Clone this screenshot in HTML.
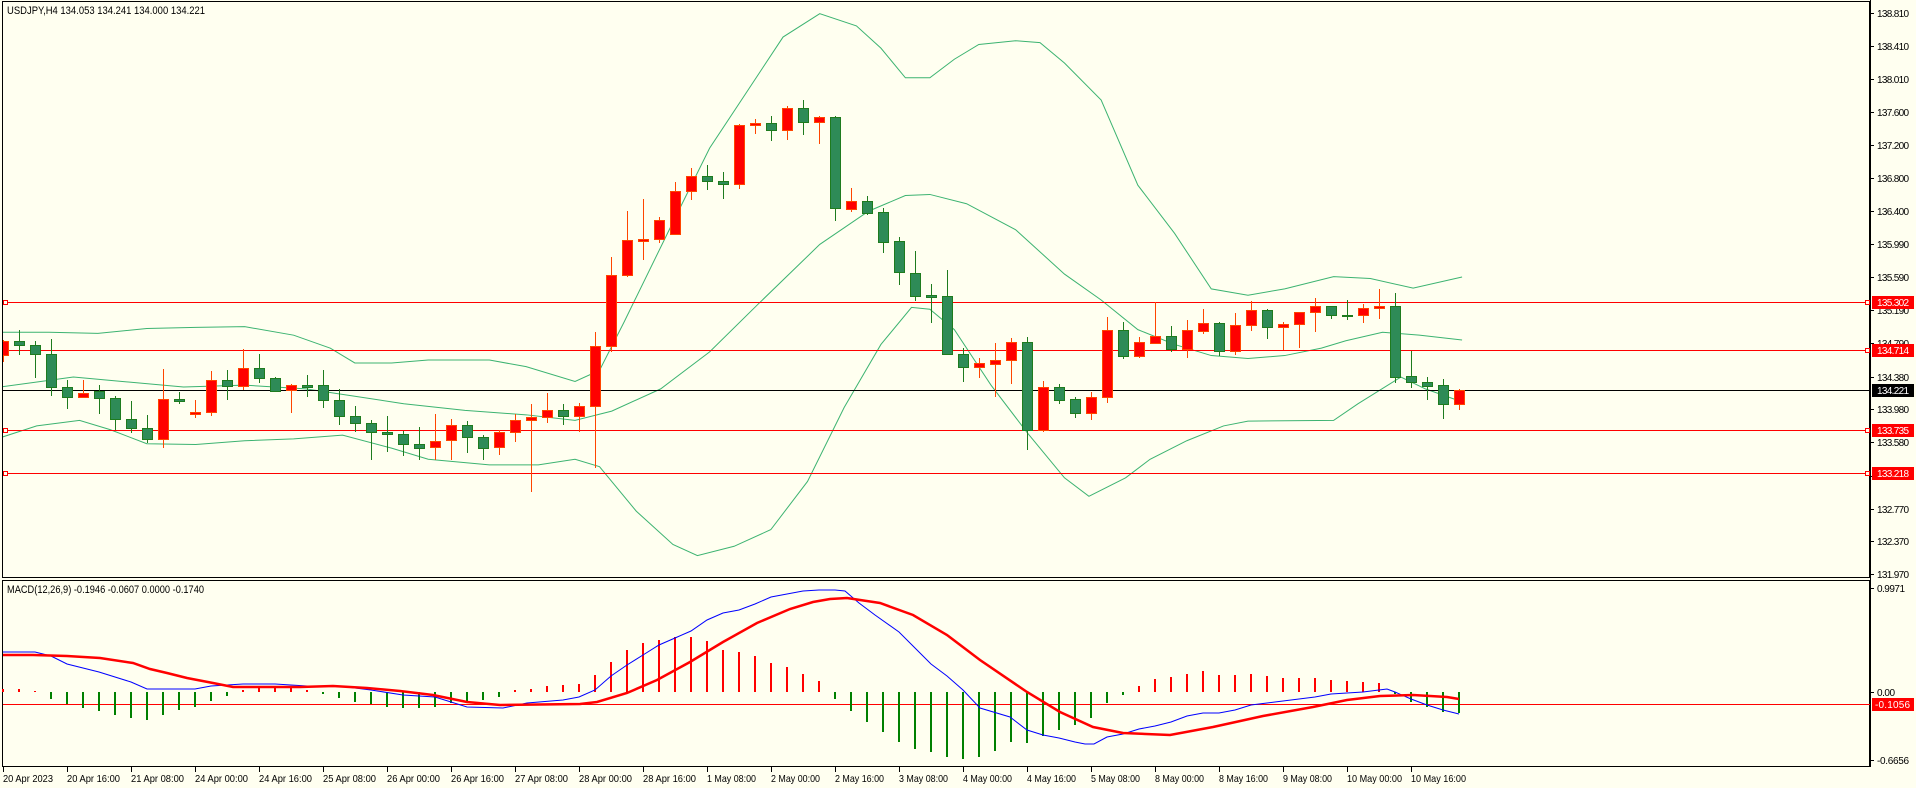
<!DOCTYPE html>
<html><head><meta charset="utf-8"><style>
html,body{margin:0;padding:0;background:#fffff0;}
body{width:1916px;height:788px;overflow:hidden;}
svg{display:block;font-family:"Liberation Sans","DejaVu Sans",sans-serif;}
.g{stroke:#1e7b1e;fill:#2e8b57;stroke-width:1}
.r{stroke:#ff4500;fill:#ff0000;stroke-width:1}
.pl{font-size:10px;fill:#000}
.dl{font-size:10.5px;fill:#000}
</style></head><body>
<svg width="1916" height="788" viewBox="0 0 1916 788" xmlns="http://www.w3.org/2000/svg" shape-rendering="crispEdges">
<rect x="0" y="0" width="1916" height="788" fill="#fffff0"/>
<rect x="2.5" y="1.5" width="1867" height="576" fill="none" stroke="#000"/>
<rect x="2.5" y="580.5" width="1867" height="186" fill="none" stroke="#000"/>
<line x1="1870.5" y1="0" x2="1870.5" y2="767" stroke="#000"/>

<clipPath id="cp"><rect x="3" y="2" width="1867" height="575"/></clipPath>
<g clip-path="url(#cp)" fill="none" stroke="#3cb371" stroke-width="1" shape-rendering="auto">
<g transform="scale(1.2235,0.37037)">
<polyline vector-effect="non-scaling-stroke" points="0,897 40,897 80,900 120,887 160,884 200,882 240,905 270,940 290,980 320,980 350,972 400,972 430,990 470,1030 490,1000 510,870 550,600 580,400 610,250 640,100 670,37 700,70 720,130 740,210 760,210 780,160 800,120 830,110 850,115 870,170 900,270 930,500 960,630 990,780 1020,797 1050,780 1090,747 1120,752 1155,778 1195,748"/>
<polyline vector-effect="non-scaling-stroke" points="0,1045 60,1018 100,1030 150,1045 200,1040 250,1050 290,1070 330,1090 380,1108 430,1120 470,1135 500,1110 540,1050 580,950 620,820 670,660 710,570 740,528 760,525 790,550 830,620 870,740 900,810 930,890 960,930 990,960 1020,968 1050,960 1080,940 1100,920 1130,897 1160,905 1195,918"/>
<polyline vector-effect="non-scaling-stroke" points="0,1182 30,1150 65,1135 90,1160 120,1198 160,1200 200,1190 240,1185 280,1175 320,1210 350,1240 400,1255 440,1255 470,1240 490,1260 520,1380 550,1470 570,1500 600,1475 630,1430 660,1300 690,1100 720,930 745,830 760,835 780,890 810,1040 840,1170 870,1290 890,1340 920,1290 940,1240 970,1190 1000,1150 1020,1137 1090,1135 1110,1090 1145,1018 1165,1050 1195,1085"/>
</g></g>

<g stroke-width="1">
<line x1="3" y1="302.5" x2="1870" y2="302.5" stroke="#ff0000"/>
<line x1="3" y1="350.5" x2="1870" y2="350.5" stroke="#ff0000"/>
<line x1="3" y1="430.5" x2="1870" y2="430.5" stroke="#ff0000"/>
<line x1="3" y1="473.5" x2="1870" y2="473.5" stroke="#ff0000"/>
<line x1="3" y1="390.5" x2="1870" y2="390.5" stroke="#000"/>
<g fill="#fffff0" stroke="#ff0000">
<rect x="3.5" y="300.5" width="4" height="4"/><rect x="1865.5" y="300.5" width="4" height="4"/>
<rect x="3.5" y="348.5" width="4" height="4"/><rect x="1865.5" y="348.5" width="4" height="4"/>
<rect x="3.5" y="428.5" width="4" height="4"/><rect x="1865.5" y="428.5" width="4" height="4"/>
<rect x="3.5" y="471.5" width="4" height="4"/><rect x="1865.5" y="471.5" width="4" height="4"/>
</g></g>

<g class="g" clip-path="url(#cp)">
<line x1="19.5" y1="330" x2="19.5" y2="355"/><rect x="14.5" y="341.5" width="10" height="4"/>
<line x1="35.5" y1="341" x2="35.5" y2="378"/><rect x="30.5" y="345.5" width="10" height="9"/>
<line x1="51.5" y1="339" x2="51.5" y2="396"/><rect x="46.5" y="354.5" width="10" height="33"/>
<line x1="67.5" y1="380" x2="67.5" y2="409"/><rect x="62.5" y="387.5" width="10" height="10"/>
<line x1="99.5" y1="385" x2="99.5" y2="414"/><rect x="94.5" y="391.5" width="10" height="7"/>
<line x1="115.5" y1="396" x2="115.5" y2="430"/><rect x="110.5" y="398.5" width="10" height="21"/>
<line x1="131.5" y1="401" x2="131.5" y2="433"/><rect x="126.5" y="419.5" width="10" height="9"/>
<line x1="147.5" y1="415" x2="147.5" y2="443"/><rect x="142.5" y="428.5" width="10" height="11"/>
<line x1="179.5" y1="392" x2="179.5" y2="404"/><rect x="174.5" y="399.5" width="10" height="2"/>
<line x1="227.5" y1="370" x2="227.5" y2="400"/><rect x="222.5" y="380.5" width="10" height="6"/>
<line x1="259.5" y1="354" x2="259.5" y2="383"/><rect x="254.5" y="368.5" width="10" height="10"/>
<line x1="275.5" y1="377" x2="275.5" y2="391"/><rect x="270.5" y="378.5" width="10" height="13"/>
<line x1="307.5" y1="375" x2="307.5" y2="397"/><rect x="302.5" y="385.5" width="10" height="2"/>
<line x1="323.5" y1="370" x2="323.5" y2="408"/><rect x="318.5" y="385.5" width="10" height="15"/>
<line x1="339.5" y1="389" x2="339.5" y2="425"/><rect x="334.5" y="400.5" width="10" height="16"/>
<line x1="355.5" y1="406" x2="355.5" y2="432"/><rect x="350.5" y="416.5" width="10" height="7"/>
<line x1="371.5" y1="420" x2="371.5" y2="460"/><rect x="366.5" y="423.5" width="10" height="9"/>
<line x1="387.5" y1="416" x2="387.5" y2="452"/><rect x="382.5" y="432.5" width="10" height="2"/>
<line x1="403.5" y1="431" x2="403.5" y2="456"/><rect x="398.5" y="434.5" width="10" height="10"/>
<line x1="419.5" y1="427" x2="419.5" y2="460"/><rect x="414.5" y="444.5" width="10" height="4"/>
<line x1="467.5" y1="421" x2="467.5" y2="453"/><rect x="462.5" y="425.5" width="10" height="12"/>
<line x1="483.5" y1="435" x2="483.5" y2="460"/><rect x="478.5" y="437.5" width="10" height="11"/>
<line x1="563.5" y1="404" x2="563.5" y2="425"/><rect x="558.5" y="410.5" width="10" height="6"/>
<line x1="707.5" y1="165" x2="707.5" y2="190"/><rect x="702.5" y="176.5" width="10" height="5"/>
<line x1="723.5" y1="172" x2="723.5" y2="199"/><rect x="718.5" y="181.5" width="10" height="3"/>
<line x1="771.5" y1="116" x2="771.5" y2="141"/><rect x="766.5" y="123.5" width="10" height="7"/>
<line x1="803.5" y1="100" x2="803.5" y2="135"/><rect x="798.5" y="108.5" width="10" height="14"/>
<line x1="835.5" y1="116" x2="835.5" y2="221"/><rect x="830.5" y="117.5" width="10" height="91"/>
<line x1="867.5" y1="196" x2="867.5" y2="215"/><rect x="862.5" y="201.5" width="10" height="12"/>
<line x1="883.5" y1="208" x2="883.5" y2="253"/><rect x="878.5" y="212.5" width="10" height="30"/>
<line x1="899.5" y1="237" x2="899.5" y2="285"/><rect x="894.5" y="241.5" width="10" height="31"/>
<line x1="915.5" y1="251" x2="915.5" y2="301"/><rect x="910.5" y="273.5" width="10" height="23"/>
<line x1="931.5" y1="284" x2="931.5" y2="323"/><rect x="926.5" y="295.5" width="10" height="2"/>
<line x1="947.5" y1="270" x2="947.5" y2="354"/><rect x="942.5" y="296.5" width="10" height="58"/>
<line x1="963.5" y1="348" x2="963.5" y2="382"/><rect x="958.5" y="354.5" width="10" height="13"/>
<line x1="1027.5" y1="337" x2="1027.5" y2="450"/><rect x="1022.5" y="342.5" width="10" height="88"/>
<line x1="1059.5" y1="384" x2="1059.5" y2="404"/><rect x="1054.5" y="387.5" width="10" height="13"/>
<line x1="1075.5" y1="397" x2="1075.5" y2="418"/><rect x="1070.5" y="399.5" width="10" height="14"/>
<line x1="1123.5" y1="322" x2="1123.5" y2="359"/><rect x="1118.5" y="330.5" width="10" height="26"/>
<line x1="1171.5" y1="326" x2="1171.5" y2="352"/><rect x="1166.5" y="336.5" width="10" height="13"/>
<line x1="1219.5" y1="322" x2="1219.5" y2="356"/><rect x="1214.5" y="323.5" width="10" height="28"/>
<line x1="1267.5" y1="309" x2="1267.5" y2="339"/><rect x="1262.5" y="310.5" width="10" height="17"/>
<line x1="1331.5" y1="306" x2="1331.5" y2="319"/><rect x="1326.5" y="306.5" width="10" height="9"/>
<line x1="1347.5" y1="300" x2="1347.5" y2="320"/><rect x="1342.5" y="315.5" width="10" height="1"/>
<line x1="1395.5" y1="293" x2="1395.5" y2="383"/><rect x="1390.5" y="306.5" width="10" height="71"/>
<line x1="1411.5" y1="351" x2="1411.5" y2="388"/><rect x="1406.5" y="376.5" width="10" height="6"/>
<line x1="1427.5" y1="377" x2="1427.5" y2="400"/><rect x="1422.5" y="382.5" width="10" height="4"/>
<line x1="1443.5" y1="379" x2="1443.5" y2="419"/><rect x="1438.5" y="385.5" width="10" height="19"/>
</g>
<g class="r" clip-path="url(#cp)">
<line x1="3.5" y1="340" x2="3.5" y2="362"/><rect x="-1.5" y="341.5" width="10" height="14"/>
<line x1="83.5" y1="380" x2="83.5" y2="397"/><rect x="78.5" y="393.5" width="10" height="4"/>
<line x1="163.5" y1="369" x2="163.5" y2="448"/><rect x="158.5" y="399.5" width="10" height="40"/>
<line x1="195.5" y1="400" x2="195.5" y2="418"/><rect x="190.5" y="412.5" width="10" height="2"/>
<line x1="211.5" y1="371" x2="211.5" y2="416"/><rect x="206.5" y="380.5" width="10" height="32"/>
<line x1="243.5" y1="349" x2="243.5" y2="390"/><rect x="238.5" y="368.5" width="10" height="18"/>
<line x1="291.5" y1="384" x2="291.5" y2="413"/><rect x="286.5" y="385.5" width="10" height="5"/>
<line x1="435.5" y1="414" x2="435.5" y2="460"/><rect x="430.5" y="441.5" width="10" height="6"/>
<line x1="451.5" y1="419" x2="451.5" y2="460"/><rect x="446.5" y="425.5" width="10" height="15"/>
<line x1="499.5" y1="430" x2="499.5" y2="455"/><rect x="494.5" y="432.5" width="10" height="15"/>
<line x1="515.5" y1="414" x2="515.5" y2="442"/><rect x="510.5" y="420.5" width="10" height="12"/>
<line x1="531.5" y1="404" x2="531.5" y2="492"/><rect x="526.5" y="417.5" width="10" height="3"/>
<line x1="547.5" y1="393" x2="547.5" y2="423"/><rect x="542.5" y="410.5" width="10" height="7"/>
<line x1="579.5" y1="403" x2="579.5" y2="432"/><rect x="574.5" y="406.5" width="10" height="10"/>
<line x1="595.5" y1="332" x2="595.5" y2="468"/><rect x="590.5" y="346.5" width="10" height="60"/>
<line x1="611.5" y1="257" x2="611.5" y2="352"/><rect x="606.5" y="275.5" width="10" height="71"/>
<line x1="627.5" y1="211" x2="627.5" y2="277"/><rect x="622.5" y="240.5" width="10" height="35"/>
<line x1="643.5" y1="199" x2="643.5" y2="260"/><rect x="638.5" y="239.5" width="10" height="2"/>
<line x1="659.5" y1="217" x2="659.5" y2="243"/><rect x="654.5" y="220.5" width="10" height="19"/>
<line x1="675.5" y1="182" x2="675.5" y2="234"/><rect x="670.5" y="191.5" width="10" height="43"/>
<line x1="691.5" y1="168" x2="691.5" y2="200"/><rect x="686.5" y="176.5" width="10" height="15"/>
<line x1="739.5" y1="124" x2="739.5" y2="189"/><rect x="734.5" y="125.5" width="10" height="59"/>
<line x1="755.5" y1="119" x2="755.5" y2="134"/><rect x="750.5" y="123.5" width="10" height="2"/>
<line x1="787.5" y1="106" x2="787.5" y2="140"/><rect x="782.5" y="108.5" width="10" height="22"/>
<line x1="819.5" y1="116" x2="819.5" y2="144"/><rect x="814.5" y="117.5" width="10" height="5"/>
<line x1="851.5" y1="188" x2="851.5" y2="212"/><rect x="846.5" y="201.5" width="10" height="8"/>
<line x1="979.5" y1="358" x2="979.5" y2="378"/><rect x="974.5" y="363.5" width="10" height="4"/>
<line x1="995.5" y1="343" x2="995.5" y2="397"/><rect x="990.5" y="360.5" width="10" height="4"/>
<line x1="1011.5" y1="338" x2="1011.5" y2="384"/><rect x="1006.5" y="342.5" width="10" height="18"/>
<line x1="1043.5" y1="381" x2="1043.5" y2="432"/><rect x="1038.5" y="387.5" width="10" height="43"/>
<line x1="1091.5" y1="392" x2="1091.5" y2="420"/><rect x="1086.5" y="397.5" width="10" height="16"/>
<line x1="1107.5" y1="317" x2="1107.5" y2="403"/><rect x="1102.5" y="330.5" width="10" height="67"/>
<line x1="1139.5" y1="337" x2="1139.5" y2="358"/><rect x="1134.5" y="342.5" width="10" height="14"/>
<line x1="1155.5" y1="302" x2="1155.5" y2="343"/><rect x="1150.5" y="336.5" width="10" height="7"/>
<line x1="1187.5" y1="320" x2="1187.5" y2="358"/><rect x="1182.5" y="330.5" width="10" height="19"/>
<line x1="1203.5" y1="309" x2="1203.5" y2="334"/><rect x="1198.5" y="323.5" width="10" height="8"/>
<line x1="1235.5" y1="313" x2="1235.5" y2="355"/><rect x="1230.5" y="325.5" width="10" height="26"/>
<line x1="1251.5" y1="301" x2="1251.5" y2="331"/><rect x="1246.5" y="310.5" width="10" height="15"/>
<line x1="1283.5" y1="322" x2="1283.5" y2="350"/><rect x="1278.5" y="324.5" width="10" height="3"/>
<line x1="1299.5" y1="312" x2="1299.5" y2="348"/><rect x="1294.5" y="312.5" width="10" height="12"/>
<line x1="1315.5" y1="298" x2="1315.5" y2="332"/><rect x="1310.5" y="306.5" width="10" height="6"/>
<line x1="1363.5" y1="304" x2="1363.5" y2="323"/><rect x="1358.5" y="308.5" width="10" height="7"/>
<line x1="1379.5" y1="289" x2="1379.5" y2="319"/><rect x="1374.5" y="306.5" width="10" height="2"/>
<line x1="1459.5" y1="389" x2="1459.5" y2="410"/><rect x="1454.5" y="390.5" width="10" height="14"/>
</g>

<text x="7" y="14" font-size="11" fill="#000" textLength="198" lengthAdjust="spacingAndGlyphs">USDJPY,H4  134.053 134.241 134.000 134.221</text>

<g stroke="#000">
<line x1="1870" y1="13.5" x2="1874" y2="13.5"/><line x1="1870" y1="46.5" x2="1874" y2="46.5"/><line x1="1870" y1="79.5" x2="1874" y2="79.5"/><line x1="1870" y1="112.5" x2="1874" y2="112.5"/><line x1="1870" y1="145.5" x2="1874" y2="145.5"/><line x1="1870" y1="178.5" x2="1874" y2="178.5"/><line x1="1870" y1="211.5" x2="1874" y2="211.5"/><line x1="1870" y1="244.5" x2="1874" y2="244.5"/><line x1="1870" y1="277.5" x2="1874" y2="277.5"/><line x1="1870" y1="310.5" x2="1874" y2="310.5"/><line x1="1870" y1="343.5" x2="1874" y2="343.5"/><line x1="1870" y1="377.5" x2="1874" y2="377.5"/><line x1="1870" y1="409.5" x2="1874" y2="409.5"/><line x1="1870" y1="442.5" x2="1874" y2="442.5"/><line x1="1870" y1="476.5" x2="1874" y2="476.5"/><line x1="1870" y1="509.5" x2="1874" y2="509.5"/><line x1="1870" y1="541.5" x2="1874" y2="541.5"/><line x1="1870" y1="574.5" x2="1874" y2="574.5"/>
<line x1="1870" y1="588.5" x2="1874" y2="588.5"/><line x1="1870" y1="692.5" x2="1874" y2="692.5"/><line x1="1870" y1="760.5" x2="1874" y2="760.5"/>
</g>
<g class="pl">
<text x="1877" y="17" textLength="32">138.810</text>
<text x="1877" y="50" textLength="32">138.410</text>
<text x="1877" y="83" textLength="32">138.010</text>
<text x="1877" y="116" textLength="32">137.600</text>
<text x="1877" y="149" textLength="32">137.200</text>
<text x="1877" y="182" textLength="32">136.800</text>
<text x="1877" y="215" textLength="32">136.400</text>
<text x="1877" y="248" textLength="32">135.990</text>
<text x="1877" y="281" textLength="32">135.590</text>
<text x="1877" y="314" textLength="32">135.190</text>
<text x="1877" y="347" textLength="32">134.790</text>
<text x="1877" y="381" textLength="32">134.380</text>
<text x="1877" y="413" textLength="32">133.980</text>
<text x="1877" y="446" textLength="32">133.580</text>
<text x="1877" y="480" textLength="32">133.170</text>
<text x="1877" y="513" textLength="32">132.770</text>
<text x="1877" y="545" textLength="32">132.370</text>
<text x="1877" y="578" textLength="32">131.970</text>
<text x="1877" y="592" textLength="28">0.9971</text>
<text x="1877" y="696" textLength="18">0.00</text>
<text x="1877" y="764" textLength="32">-0.6656</text>
</g>
<g>
<rect x="1872" y="296" width="42" height="13" fill="#ff0000"/>
<rect x="1872" y="344" width="42" height="13" fill="#ff0000"/>
<rect x="1872" y="424" width="42" height="13" fill="#ff0000"/>
<rect x="1872" y="467" width="42" height="13" fill="#ff0000"/>
<rect x="1872" y="384" width="42" height="13" fill="#000"/>
<rect x="1872" y="698" width="42" height="13" fill="#ff0000"/>
</g>
<g class="pl" style="fill:#fff">
<text x="1877" y="306" textLength="32">135.302</text>
<text x="1877" y="354" textLength="32">134.714</text>
<text x="1877" y="434" textLength="32">133.735</text>
<text x="1877" y="477" textLength="32">133.218</text>
<text x="1877" y="394" textLength="32">134.221</text>
<text x="1875" y="708" textLength="35">-0.1056</text>
</g>

<text x="7" y="593" font-size="11" fill="#000" textLength="197" lengthAdjust="spacingAndGlyphs">MACD(12,26,9) -0.1946 -0.0607 0.0000 -0.1740</text>
<line x1="3" y1="704.5" x2="1870" y2="704.5" stroke="#ff0000"/>
<path stroke="#ff0000" stroke-width="2" fill="none" d="M3 692V689M19 692V689M35 692V691M243 692V690M259 692V687M275 692V687M291 692V687M307 692V690M515 692V690M531 692V689M547 692V686M563 692V685M579 692V684M595 692V675M611 692V662M627 692V650M643 692V643M659 692V640M675 692V637M691 692V637M707 692V641M723 692V650M739 692V652M755 692V656M771 692V663M787 692V667M803 692V674M819 692V681M1139 692V686M1155 692V679M1171 692V677M1187 692V674M1203 692V671M1219 692V675M1235 692V675M1251 692V674M1267 692V676M1283 692V678M1299 692V678M1315 692V678M1331 692V680M1347 692V681M1363 692V682M1379 692V683"/>
<path stroke="#008000" stroke-width="2" fill="none" d="M51 692V699M67 692V704M83 692V708M99 692V711M115 692V715M131 692V718M147 692V720M163 692V715M179 692V710M195 692V707M211 692V701M227 692V696M323 692V694M339 692V698M355 692V702M371 692V704M387 692V707M403 692V708M419 692V708M435 692V707M451 692V703M467 692V701M483 692V700M499 692V697M835 692V699M851 692V711M867 692V722M883 692V732M899 692V742M915 692V749M931 692V752M947 692V757M963 692V759M979 692V757M995 692V751M1011 692V742M1027 692V743M1043 692V736M1059 692V730M1075 692V725M1091 692V718M1107 692V703M1123 692V695M1395 692V694M1411 692V702M1427 692V707M1443 692V712M1459 692V713"/>
<polyline shape-rendering="auto" fill="none" stroke="#0000ff" stroke-width="1" points="3,652 35,652 51,656 67,664 99,672 131,682 147,689 195,689 211,686 243,684 275,684 307,686 339,686 371,690 403,695 435,697 467,707 503,708 527,703 563,700 579,697 595,690 611,676 627,665 643,655 659,645 675,638 691,631 707,620 723,613 739,610 755,604 771,597 787,594 803,591 819,590 835,590 845,591 859,603 875,615 899,632 915,648 931,664 947,676 963,690 980,708 1010,717 1027,730 1043,735 1059,738 1075,742 1085,744 1094,744 1107,737 1123,734 1139,729 1155,726 1171,722 1187,716 1203,713 1219,713 1235,710 1251,705 1267,703 1283,701 1299,699 1315,697 1331,694 1347,693 1363,692 1379,690 1387,689 1395,692 1411,699 1427,705 1443,710 1459,714"/>
<polyline shape-rendering="auto" fill="none" stroke="#ff0000" stroke-width="2.5" points="3,655 33,655 67,656 100,658 133,663 150,669 167,673 187,678 213,683 233,687 300,687 333,686 367,688 400,691 433,695 467,702 500,705 580,704 597,702 627,693 657,680 690,662 723,642 757,623 790,609 813,602 830,599 847,598 880,603 913,615 947,635 980,660 1027,692 1060,712 1093,727 1123,733 1170,735 1213,727 1263,716 1313,707 1347,700 1380,696 1413,695 1447,697 1459,699"/>

<path stroke="#000" d="M3.5 767V772M67.5 767V772M131.5 767V772M195.5 767V772M259.5 767V772M323.5 767V772M387.5 767V772M451.5 767V772M515.5 767V772M579.5 767V772M643.5 767V772M707.5 767V772M771.5 767V772M835.5 767V772M899.5 767V772M963.5 767V772M1027.5 767V772M1091.5 767V772M1155.5 767V772M1219.5 767V772M1283.5 767V772M1347.5 767V772M1411.5 767V772"/>
<g class="dl">
<text x="3" y="782" textLength="50" lengthAdjust="spacingAndGlyphs">20 Apr 2023</text>
<text x="67" y="782" textLength="53" lengthAdjust="spacingAndGlyphs">20 Apr 16:00</text>
<text x="131" y="782" textLength="53" lengthAdjust="spacingAndGlyphs">21 Apr 08:00</text>
<text x="195" y="782" textLength="53" lengthAdjust="spacingAndGlyphs">24 Apr 00:00</text>
<text x="259" y="782" textLength="53" lengthAdjust="spacingAndGlyphs">24 Apr 16:00</text>
<text x="323" y="782" textLength="53" lengthAdjust="spacingAndGlyphs">25 Apr 08:00</text>
<text x="387" y="782" textLength="53" lengthAdjust="spacingAndGlyphs">26 Apr 00:00</text>
<text x="451" y="782" textLength="53" lengthAdjust="spacingAndGlyphs">26 Apr 16:00</text>
<text x="515" y="782" textLength="53" lengthAdjust="spacingAndGlyphs">27 Apr 08:00</text>
<text x="579" y="782" textLength="53" lengthAdjust="spacingAndGlyphs">28 Apr 00:00</text>
<text x="643" y="782" textLength="53" lengthAdjust="spacingAndGlyphs">28 Apr 16:00</text>
<text x="707" y="782" textLength="49" lengthAdjust="spacingAndGlyphs">1 May 08:00</text>
<text x="771" y="782" textLength="49" lengthAdjust="spacingAndGlyphs">2 May 00:00</text>
<text x="835" y="782" textLength="49" lengthAdjust="spacingAndGlyphs">2 May 16:00</text>
<text x="899" y="782" textLength="49" lengthAdjust="spacingAndGlyphs">3 May 08:00</text>
<text x="963" y="782" textLength="49" lengthAdjust="spacingAndGlyphs">4 May 00:00</text>
<text x="1027" y="782" textLength="49" lengthAdjust="spacingAndGlyphs">4 May 16:00</text>
<text x="1091" y="782" textLength="49" lengthAdjust="spacingAndGlyphs">5 May 08:00</text>
<text x="1155" y="782" textLength="49" lengthAdjust="spacingAndGlyphs">8 May 00:00</text>
<text x="1219" y="782" textLength="49" lengthAdjust="spacingAndGlyphs">8 May 16:00</text>
<text x="1283" y="782" textLength="49" lengthAdjust="spacingAndGlyphs">9 May 08:00</text>
<text x="1347" y="782" textLength="55" lengthAdjust="spacingAndGlyphs">10 May 00:00</text>
<text x="1411" y="782" textLength="55" lengthAdjust="spacingAndGlyphs">10 May 16:00</text>
</g>
</svg>
</body></html>
